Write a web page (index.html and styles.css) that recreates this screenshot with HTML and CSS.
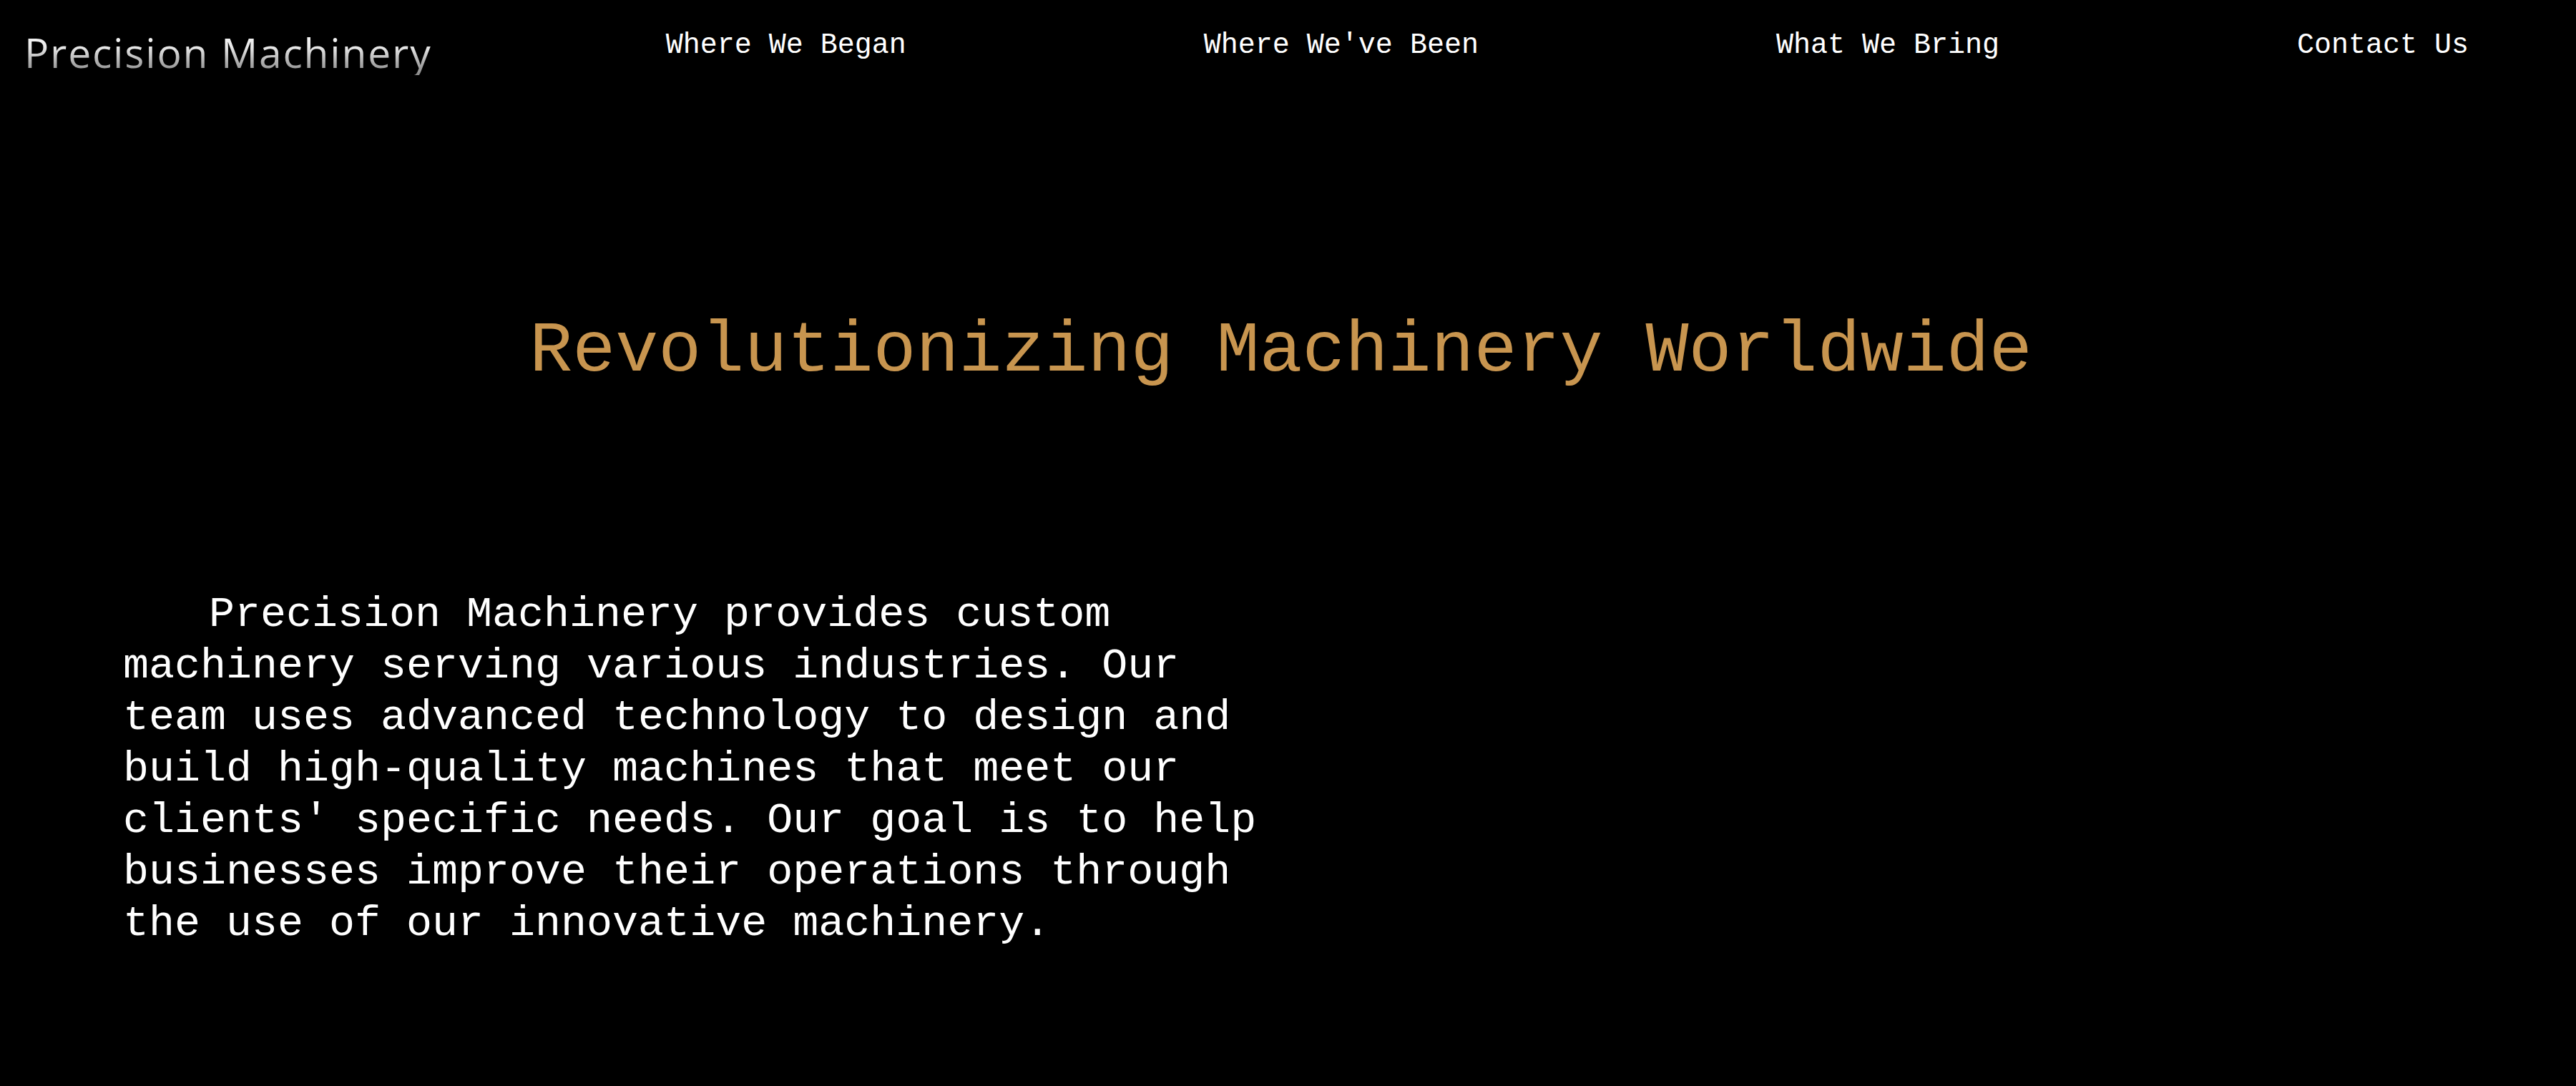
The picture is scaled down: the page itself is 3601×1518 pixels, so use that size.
FILE: index.html
```html
<!DOCTYPE html>
<html lang="en">
<head>
<meta charset="utf-8">
<title>Precision Machinery</title>
<link rel="stylesheet" href="styles.css">
</head>
<body>
<header class="site-header">
  <div class="logo">Precision Machinery</div>
  <nav class="main-nav">
    <a href="#began">Where We Began</a>
    <a href="#been">Where We've Been</a>
    <a href="#bring">What We Bring</a>
    <a href="#contact">Contact Us</a>
  </nav>
</header>
<main>
  <h1 class="hero-title">Revolutionizing Machinery Worldwide</h1>
  <p class="intro">Precision Machinery provides custom machinery serving various industries. Our team uses advanced technology to design and build high-quality machines that meet our clients' specific needs. Our goal is to help businesses improve their operations through the use of our innovative machinery.</p>
</main>
</body>
</html>
```

FILE: styles.css
```css
html, body {
  margin: 0;
  padding: 0;
  background: #000;
}

body {
  font-family: "Liberation Mono", "Courier New", monospace;
  color: #fff;
  min-height: 1518px;
}

.site-header {
  display: flex;
  align-items: flex-start;
  justify-content: space-between;
  padding: 0 150px 0 34px;
}

.logo {
  font-family: "Open Sans", "Noto Sans", sans-serif;
  font-weight: 400;
  font-size: 57px;
  line-height: 64px;
  margin-top: 41px;
  letter-spacing: 1.8px;
  background: linear-gradient(180deg, #ffffff 0%, #e6e6e6 40%, #a8a8a8 75%, #8a8a8a 100%);
  -webkit-background-clip: text;
  background-clip: text;
  color: transparent;
}

.main-nav {
  display: flex;
  gap: 416px;
  margin-top: 41px;
}

.main-nav a {
  color: #fff;
  text-decoration: none;
  font-size: 40px;
  line-height: 45px;
}

.hero-title {
  font-family: "Liberation Mono", "Courier New", monospace;
  font-weight: normal;
  font-size: 100px;
  line-height: 113px;
  color: #c8954f;
  text-align: center;
  margin: 330px 20px 0 0;
}

.intro {
  font-size: 60px;
  line-height: 72px;
  text-indent: 120px;
  width: 1620px;
  margin: 275px 0 0 172px;
}
```
